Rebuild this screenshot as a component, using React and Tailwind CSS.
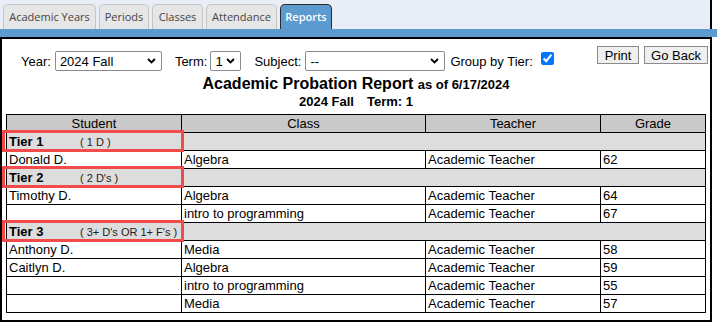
import React from "react";

const tiers = [
  {
    name: "Tier 1",
    desc: "( 1 D )",
    rows: [["Donald D.", "Algebra", "Academic Teacher", "62"]],
  },
  {
    name: "Tier 2",
    desc: "( 2 D's )",
    rows: [
      ["Timothy D.", "Algebra", "Academic Teacher", "64"],
      ["", "intro to programming", "Academic Teacher", "67"],
    ],
  },
  {
    name: "Tier 3",
    desc: "( 3+ D's OR 1+ F's )",
    rows: [
      ["Anthony D.", "Media", "Academic Teacher", "58"],
      ["Caitlyn D.", "Algebra", "Academic Teacher", "59"],
      ["", "intro to programming", "Academic Teacher", "55"],
      ["", "Media", "Academic Teacher", "57"],
    ],
  },
];

function Chevron() {
  return (
    <svg width="9" height="6" viewBox="0 0 10 7" className="shrink-0">
      <path d="M1 1.2 L5 5.2 L9 1.2" fill="none" stroke="#000" strokeWidth="2.2" />
    </svg>
  );
}

function Select({ value, width }) {
  return (
    <div
      className={`flex h-[20px] items-center justify-between rounded-[2px] border border-[#8a8a8a] bg-white pl-[4px] pr-[5px] text-[13px] leading-[15px] text-black ${width}`}
    >
      <span>{value}</span>
      <Chevron />
    </div>
  );
}

function Tab({ label, w, active }) {
  if (active) {
    return (
      <div
        className={`flex h-[25px] items-center justify-center rounded-t-[5px] border border-b-0 border-[#2b2b2b] bg-[#5b9bcf] text-[11px] font-semibold text-white ${w}`}
      >
        {label}
      </div>
    );
  }
  return (
    <div
      className={`flex h-[25px] items-center justify-center rounded-t-[5px] border border-b-0 border-[#c5c5c5] bg-[#e6e6e6] text-[11px] text-[#454545] ${w}`}
    >
      {label}
    </div>
  );
}

export default function App() {
  return (
    <div className="h-[323px] w-[717px] overflow-hidden bg-white font-[family-name:'Liberation_Sans',Arial,sans-serif] text-black">
      {/* tab strip */}
      <div className="flex h-[29px] w-[712px] items-end gap-[3px] border-r-2 border-black bg-[#e9eef6] pl-[3px] font-[family-name:'Open_Sans',sans-serif]">
        <Tab label="Academic Years" w="w-[93px]" />
        <Tab label="Periods" w="w-[50px]" />
        <Tab label="Classes" w="w-[51px]" />
        <Tab label="Attendance" w="w-[71px]" />
        <Tab label="Reports" w="w-[52px]" active />
      </div>
      <div className="h-[8px] w-full bg-[#5b9bcf]" />

      {/* content */}
      <div className="h-[285px] w-[712px] border-2 border-black bg-white">
        <div className="flex items-start justify-between">
          <div className="mt-[12px] flex h-[20px] items-center text-[13px] leading-[15px]">
            <span className="ml-[19px]">Year:</span>
            <div className="ml-[4px]">
              <Select value="2024 Fall" width="w-[107px]" />
            </div>
            <span className="ml-[13px]">Term:</span>
            <div className="ml-[3px]">
              <Select value="1" width="w-[31px]" />
            </div>
            <span className="ml-[13px]">Subject:</span>
            <div className="ml-[4px]">
              <Select value="--" width="w-[140px]" />
            </div>
            <span className="ml-[5px]">Group by Tier:</span>
            <input
              type="checkbox"
              defaultChecked
              className="mb-[5px] ml-[8px] h-[13px] w-[13px]"
            />
          </div>
          <div className="mr-[2px] mt-[7px] flex gap-[5px]">
            <button className="flex h-[18px] w-[42px] items-center justify-center border border-[#8a8a8a] bg-[#efefef] text-[13px] leading-[15px] text-black">
              Print
            </button>
            <button className="flex h-[18px] w-[64px] items-center justify-center border border-[#8a8a8a] bg-[#efefef] text-[13px] leading-[15px] text-black">
              Go Back
            </button>
          </div>
        </div>

        <div className="mt-[4px] text-center font-bold">
          <div className="text-[16px] leading-[18px]">
            Academic Probation Report <span className="text-[13px]">as of 6/17/2024</span>
          </div>
          <div className="text-[13px] leading-[15px]">
            2024 Fall<span className="ml-[13px]">Term: 1</span>
          </div>
        </div>

        <table className="ml-[4px] mt-[5px] w-[699px] table-fixed border-collapse text-[13px] leading-[15px]">
          <colgroup>
            <col className="w-[175px]" />
            <col className="w-[244px]" />
            <col className="w-[175px]" />
            <col className="w-[105px]" />
          </colgroup>
          <thead>
            <tr className="h-[18px] bg-[#c9c9c9]">
              <th className="border border-black p-0 font-normal">Student</th>
              <th className="border border-black p-0 font-normal">Class</th>
              <th className="border border-black p-0 font-normal">Teacher</th>
              <th className="border border-black p-0 font-normal">Grade</th>
            </tr>
          </thead>
          <tbody>
            {tiers.map((t) => (
              <React.Fragment key={t.name}>
                <tr className="h-[18px] bg-[#dddddd]">
                  <td className="relative border border-black p-0 pl-[2px]">
                    <span className="inline-block w-[71px] font-bold">{t.name}</span>
                    <span className="text-[11px] text-[#222]">{t.desc}</span>
                    <div className="pointer-events-none absolute -bottom-[2px] -left-[5px] -right-[3px] -top-[3px] border-[3px] border-[#f14b4b]" />
                  </td>
                  <td colSpan={3} className="border border-black p-0" />
                </tr>
                {t.rows.map((r, i) => (
                  <tr key={i} className="h-[18px] bg-white">
                    {r.map((c, j) => (
                      <td key={j} className="border border-black p-0 pl-[2px]">
                        {c}
                      </td>
                    ))}
                  </tr>
                ))}
              </React.Fragment>
            ))}
          </tbody>
        </table>
      </div>
    </div>
  );
}
